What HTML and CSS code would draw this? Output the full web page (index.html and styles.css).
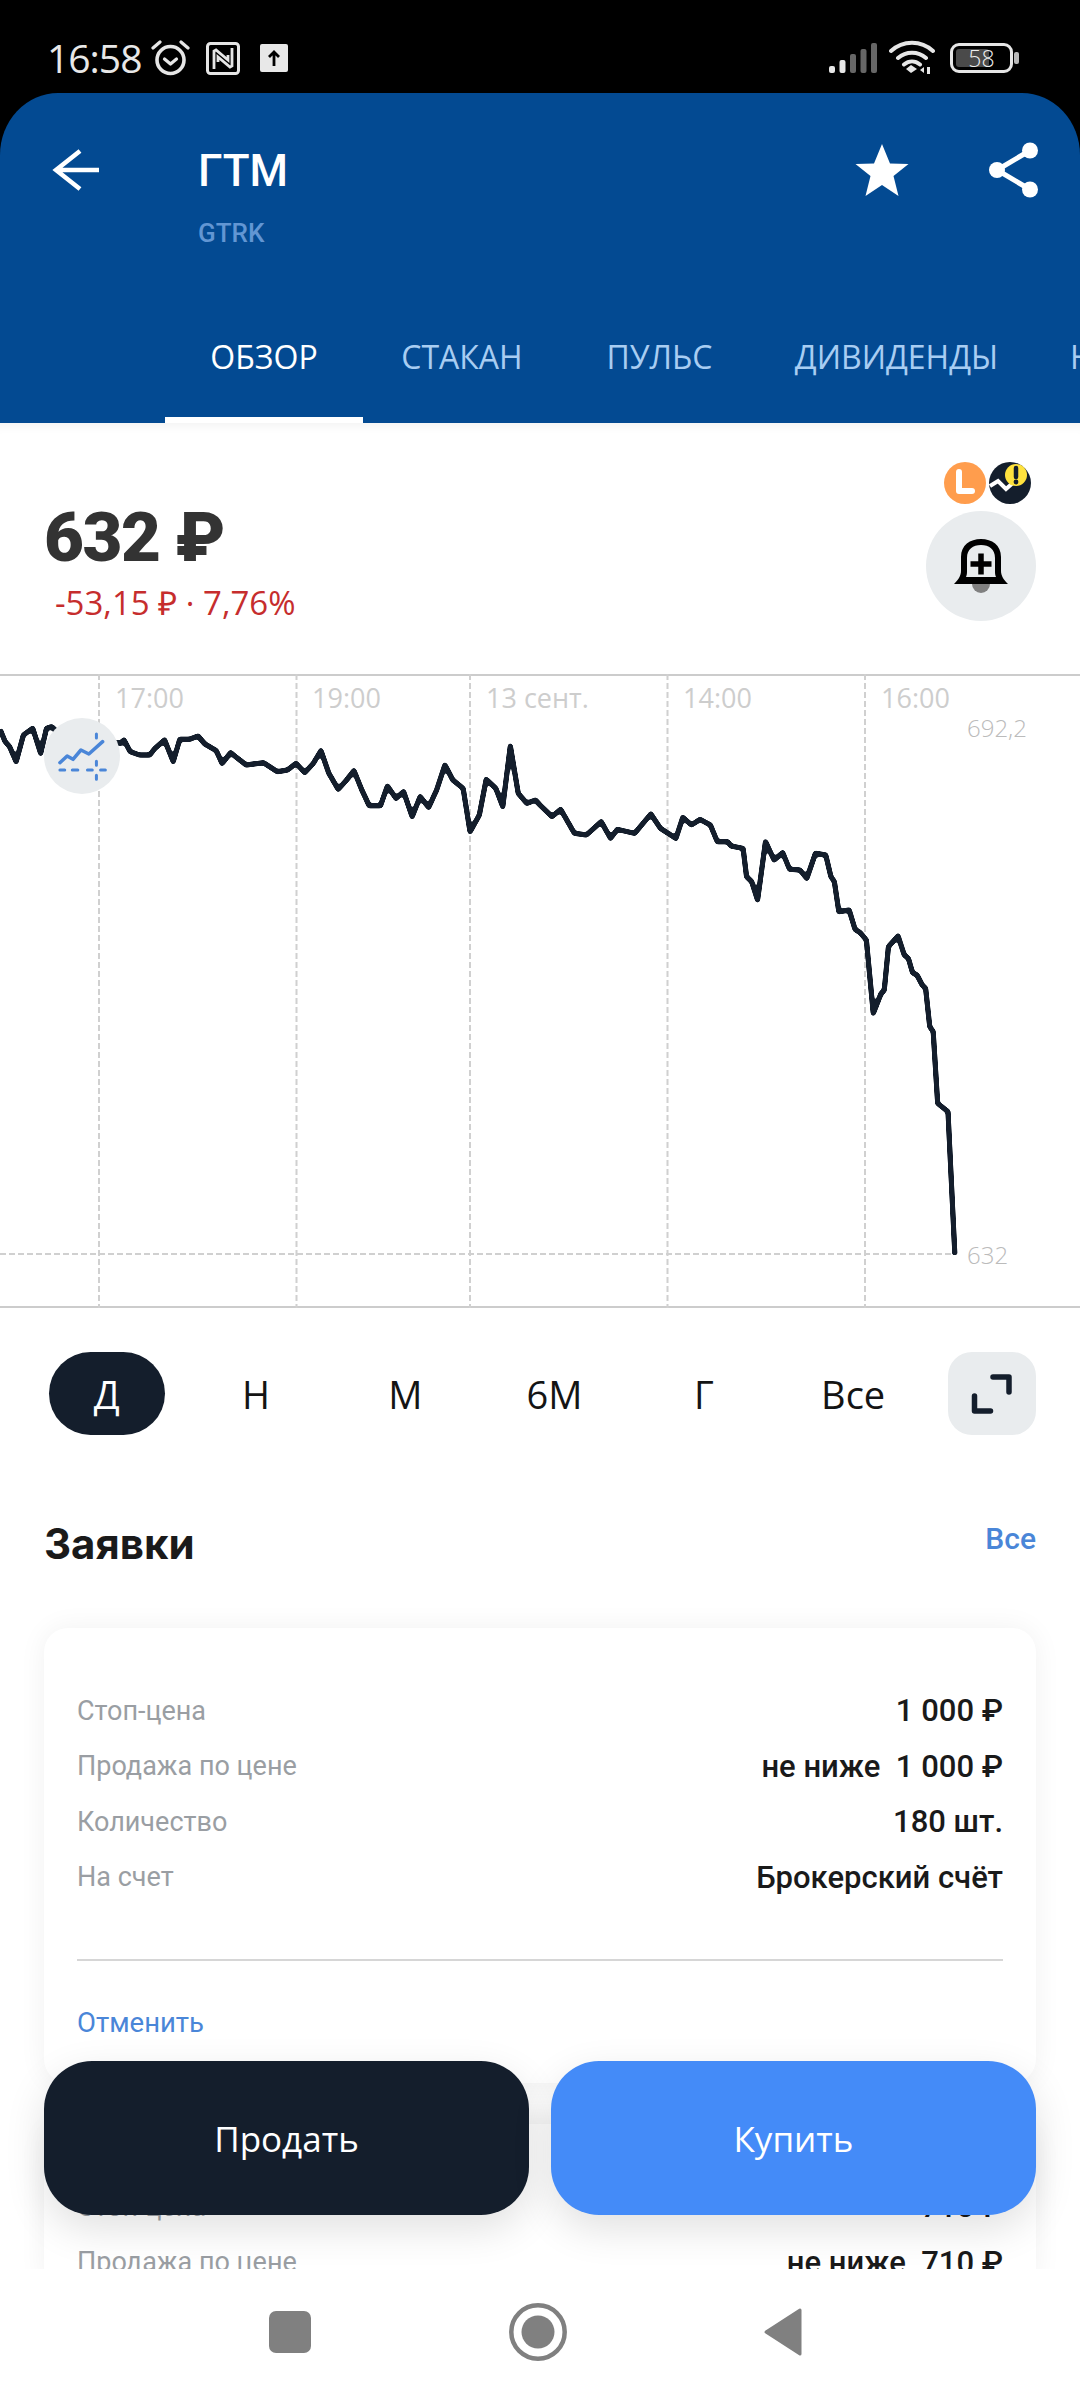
FILE: index.html
```html
<!DOCTYPE html>
<html lang="ru">
<head>
<meta charset="utf-8">
<title>ГТМ</title>
<link rel="stylesheet" href="styles.css">
</head>
<body>
<div class="app">
  <div class="content">
    <div class="top">
      <div class="statusbar">
        <div class="status-left">
          <span class="time">16:58</span>
          <svg class="ico-alarm" viewBox="0 0 39 38" width="39" height="38"><circle cx="19.500" cy="21" r="13.500" fill="none" stroke="#e6e6e6" stroke-width="3.600"/><path d="M13.500 20l6 5 6-5" fill="none" stroke="#e6e6e6" stroke-width="3.200" stroke-linecap="round" stroke-linejoin="round"/><path d="M2 9l7-6M37 9l-7-6" fill="none" stroke="#e6e6e6" stroke-width="3.200" stroke-linecap="round"/></svg>
          <svg class="ico-nfc" viewBox="0 0 34 33" width="34" height="33"><rect x="1.500" y="1.500" width="31" height="30" rx="3" fill="none" stroke="#e6e6e6" stroke-width="3"/><path d="M8 27V9l2-1 12 10v-5M26 6v18l-2 1L12 15v5" fill="none" stroke="#e6e6e6" stroke-width="2.800"/></svg>
          <svg class="ico-up" viewBox="0 0 28 28" width="28" height="28"><rect width="28" height="28" rx="2" fill="#e8e8e8"/><path d="M14 22V8M9 13l5-5 5 5" fill="none" stroke="#000" stroke-width="2.800"/></svg>
        </div>
        <div class="status-right">
          <svg class="ico-signal" viewBox="0 0 48 30" width="48" height="30"><rect x="0" y="23" width="6" height="7" rx="2" fill="#e6e6e6"/><rect x="10.500" y="17" width="6" height="13" rx="2" fill="#e6e6e6"/><rect x="21" y="11" width="6" height="19" rx="2" fill="#666"/><rect x="31.500" y="6" width="6" height="24" rx="2" fill="#666"/><rect x="42" y="0" width="6" height="30" rx="2" fill="#666"/></svg>
          <svg class="ico-wifi" viewBox="0 0 46 36" width="46" height="36"><path d="M2 11C14 0 32 0 44 11M9 18c8-7 20-7 28 0M15 24.500c5-4 11-4 16 0" fill="none" stroke="#e6e6e6" stroke-width="4" stroke-linecap="round"/><path d="M17 29l5-4 6 4-6 4z" fill="#e6e6e6"/><path d="M31 30l4-3v6zM38 27h3v7h-3z" fill="#e6e6e6"/></svg>
          <div class="battery"><span class="batt-fill"></span><span class="batt-num">58</span></div>
          <span class="batt-nub"></span>
        </div>
      </div>
      <header class="header">
        <div class="header-row">
          <svg class="ico-back" viewBox="0 0 50 44" width="50" height="44"><path d="M49 22H7M30 3L6 22l24 19" fill="none" stroke="#fff" stroke-width="4.500"/></svg>
          <div class="titles">
            <div class="title">ГТМ</div>
            <div class="ticker">GTRK</div>
          </div>
          <svg class="ico-star" viewBox="0 0 54 54" width="54" height="54"><path d="M27 1l8 19.500 18.500.5-15 12 5 20L27 42 10.500 53l5-20L.5 21 19 20.500z" fill="#fff"/></svg>
          <svg class="ico-share" viewBox="0 0 50 56" width="50" height="56"><path d="M41 8.500L8 28l33 19.500" fill="none" stroke="#fff" stroke-width="5"/><circle cx="41" cy="8.500" r="8" fill="#fff"/><circle cx="8" cy="28" r="8" fill="#fff"/><circle cx="41" cy="47.500" r="8" fill="#fff"/></svg>
        </div>
        <nav class="tabs">
          <span class="tab tab-active">ОБЗОР</span>
          <span class="tab">СТАКАН</span>
          <span class="tab">ПУЛЬС</span>
          <span class="tab">ДИВИДЕНДЫ</span>
          <span class="tab">НОВОСТИ</span>
        </nav>
      </header>
    </div>

    <section class="quote">
      <div class="quote-main">
        <div class="price">632 ₽</div>
        <div class="change">-53,15 ₽ · 7,76%</div>
      </div>
      <div class="quote-side">
        <div class="badges">
          <svg viewBox="0 0 42 44" width="42" height="44"><circle cx="21" cy="22" r="21" fill="#ff9d4d"/><path d="M15 11v19h13" fill="none" stroke="#fff" stroke-width="6" stroke-linecap="round" stroke-linejoin="round"/></svg>
          <svg viewBox="0 0 42 44" width="42" height="44"><circle cx="21" cy="22" r="21" fill="#141e2c"/><path d="M1 25l8-5 8 8 9-8 8-10" fill="none" stroke="#fff" stroke-width="4"/><circle cx="27" cy="14" r="11" fill="#ffe23e"/><path d="M27 7v9" stroke="#141e2c" stroke-width="4.500" stroke-linecap="round"/><circle cx="27" cy="21" r="2.400" fill="#141e2c"/></svg>
        </div>
        <button class="bell" type="button">
          <svg viewBox="0 0 54 54" width="54" height="54"><path d="M18 45a9 9 0 0 0 18 0z" fill="#808080"/><path d="M7 18C7 6 16 0 27 0s20 6 20 18v14c0 5 3 9 7 13H0c4-4 7-8 7-13z" fill="#000"/><path d="M13 19C13 10 19 6 27 6s14 4 14 13v14c0 2 .5 4 1 5H12c.5-1 1-3 1-5z" fill="#e9ecee"/><path d="M27 14.500v21M16.500 25h21" stroke="#000" stroke-width="5.500"/></svg>
        </button>
      </div>
    </section>

    <div class="chart">
      <svg class="chart-svg" viewBox="0 0 1080 634" width="1080" height="634">
        <defs>
          <filter id="soften" x="-5%" y="-5%" width="110%" height="110%" color-interpolation-filters="sRGB">
            <feGaussianBlur stdDeviation="1.300"/>
            <feComponentTransfer><feFuncA type="linear" slope="5" intercept="-1.700"/></feComponentTransfer>
          </filter>
        </defs>
        <path class="grid-line" d="M99 0V634M296.500 0V634M470 0V634M667.500 0V634M865 0V634"/>
        <path class="grid-line" d="M0 580H953"/>
        <g class="axis-x">
          <text x="115" y="34">17:00</text>
          <text x="312" y="34">19:00</text>
          <text x="486" y="34">13 сент.</text>
          <text x="683" y="34">14:00</text>
          <text x="881" y="34">16:00</text>
        </g>
        <text class="axis-y" x="967" y="63">692,2</text>
        <text class="axis-y" x="967" y="590">632</text>
        <g filter="url(#soften)">
          <g transform="scale(0.34435 0.33333) translate(0 -702)">
            <polyline class="price-line" points="0,868 15,905 28,920 47,965 68,885 95,865 118,940 135,865 150,860 170,880 350,910 360,900 378,935 405,945 435,945 450,925 478,900 503,965 522,898 550,898 575,888 595,912 628,932 645,970 670,938 690,955 715,975 765,968 805,995 835,990 860,970 885,998 910,970 932,932 955,1000 982,1048 1005,1022 1028,992 1050,1048 1072,1097 1105,1097 1125,1038 1150,1075 1172,1055 1197,1130 1220,1070 1245,1102 1268,1050 1292,975 1315,1020 1345,1045 1365,1175 1392,1125 1412,1018 1440,1045 1460,1100 1482,918 1505,1060 1530,1090 1555,1080 1568,1095 1603,1130 1628,1108 1668,1180 1703,1185 1746,1145 1773,1195 1793,1168 1843,1180 1890,1122 1918,1165 1963,1195 1983,1132 2008,1155 2033,1138 2063,1155 2083,1205 2113,1205 2123,1218 2158,1225 2168,1310 2183,1325 2200,1380 2208,1320 2223,1205 2248,1260 2273,1238 2293,1288 2323,1290 2343,1315 2368,1240 2398,1245 2413,1310 2423,1325 2436,1415 2466,1410 2483,1468 2498,1478 2516,1500 2536,1720 2558,1662 2568,1650 2580,1520 2608,1488 2626,1545 2638,1555 2650,1598 2663,1605 2678,1635 2688,1645 2700,1760 2710,1775 2723,1990 2753,2015 2773,2445"/>
          </g>
        </g>
        <circle class="chart-tool" cx="82" cy="82" r="38"/>
        <g transform="scale(0.34435 0.33333) translate(0 -702)">
          <polyline class="tool-line" points="174,968 195,948 212,958 235,930 258,942 298,905"/>
          <path class="tool-dash" d="M174 990h14M210 990h16M254 990h14M292 990h14M280 882v12M280 964v12M280 1006v12"/>
        </g>
      </svg>
    </div>

    <div class="periods">
      <span class="period period-active"><span class="pill">Д</span></span>
      <span class="period">Н</span>
      <span class="period">М</span>
      <span class="period">6М</span>
      <span class="period">Г</span>
      <span class="period">Все</span>
      <button class="expand" type="button">
        <svg viewBox="0 0 88 83" width="88" height="83"><path d="M45 25h16v15M26.500 44v15h16" fill="none" stroke="#141e2c" stroke-width="5.500" stroke-linecap="round" stroke-linejoin="round"/></svg>
      </button>
    </div>

    <section class="orders">
      <div class="orders-head">
        <h2 class="orders-title">Заявки</h2>
        <span class="orders-all">Все</span>
      </div>
      <article class="card">
        <div class="row"><span class="label">Стоп-цена</span><span class="value">1 000 ₽</span></div>
        <div class="row"><span class="label">Продажа по цене</span><span class="value">не ниже&nbsp; 1 000 ₽</span></div>
        <div class="row"><span class="label">Количество</span><span class="value">180 шт.</span></div>
        <div class="row"><span class="label">На счет</span><span class="value">Брокерский счёт</span></div>
        <div class="card-divider"></div>
        <div class="card-foot"><span class="cancel">Отменить</span></div>
      </article>
      <article class="card">
        <div class="row"><span class="label">Стоп-цена</span><span class="value">710 ₽</span></div>
        <div class="row"><span class="label">Продажа по цене</span><span class="value">не ниже&nbsp; 710 ₽</span></div>
      </article>
    </section>
  </div>

  <div class="actions">
    <button class="action action-sell" type="button">Продать</button>
    <button class="action action-buy" type="button">Купить</button>
  </div>

  <nav class="navbar">
    <span class="nav-square"></span>
    <svg viewBox="0 0 58 58" width="58" height="58"><circle cx="29" cy="29" r="26.700" fill="none" stroke="#808080" stroke-width="4.500"/><circle cx="29" cy="29" r="16.500" fill="#808080"/></svg>
    <svg viewBox="0 0 40 50" width="40" height="50"><path d="M37 3v44L3 25z" fill="#808080" stroke="#808080" stroke-width="3" stroke-linejoin="round"/></svg>
  </nav>
</div>
</body>
</html>
```
FILE: styles.css
```css
* { box-sizing: border-box; }
html, body { margin: 0; padding: 0; background: #fff; }
body { font-family: Roboto, "Noto Sans", sans-serif; }

.app {
  position: relative;
  width: 1080px;
  height: 2400px;
  display: flex;
  flex-direction: column;
  overflow: hidden;
}
.content { flex: 1; min-height: 0; overflow: hidden; }

/* status bar */
.top { background: #000; }
.statusbar {
  height: 93px;
  padding: 36px 61px 0 47px;
  display: flex;
  justify-content: space-between;
  align-items: flex-start;
}
.status-left, .status-right { display: flex; align-items: center; }
.time {
  font-family: "Open Sans", sans-serif;
  font-size: 39px;
  line-height: 44px;
  letter-spacing: -1px;
  color: #e8e8e8;
  width: 104px;
}
.ico-nfc { margin-left: 16px; }
.ico-up { margin-left: 20px; }
.status-right { padding-top: 4px; }
.ico-wifi { margin-left: 12px; }
.battery {
  position: relative;
  width: 63px;
  height: 30px;
  margin-left: 15px;
  border: 3px solid #e6e6e6;
  border-radius: 9px;
  display: flex;
  align-items: center;
  justify-content: center;
}
.batt-fill {
  position: absolute;
  left: 3px;
  top: 3px;
  bottom: 3px;
  width: 33px;
  background: #4a4a4a;
  border-radius: 3px;
}
.batt-num {
  position: relative;
  font-family: "Open Sans", sans-serif;
  font-size: 23px;
  font-weight: 300;
  line-height: 24px;
  color: #eee;
}
.batt-nub {
  width: 5px;
  height: 12px;
  margin-left: 1px;
  background: #b8b8b8;
  border-radius: 2px;
}

/* header */
.header {
  height: 330px;
  background: #034a92;
  border-radius: 58px 58px 0 0 / 62px 62px 0 0;
  display: flex;
  flex-direction: column;
}
.header-row {
  height: 225px;
  display: flex;
  align-items: flex-start;
  padding-left: 50px;
}
.ico-back { margin-top: 55px; }
.titles { margin-left: 98px; padding-top: 53px; flex: 1; }
.title { font-size: 44px; font-weight: 500; line-height: 50px; color: #fff; }
.ticker { font-size: 26px; font-weight: 500; line-height: 30px; margin-top: 22px; color: #6296d3; }
.ico-star { margin-top: 50px; margin-right: 80px; }
.ico-share { margin-top: 49px; margin-right: 41px; }

.tabs { display: flex; padding-left: 165px; overflow: hidden; white-space: nowrap; }
.tab {
  flex: none;
  height: 105px;
  font-family: "Open Sans", sans-serif;
  font-size: 32px;
  line-height: 78px;
  text-align: center;
  color: #a8cdf2;
  border-bottom: 6px solid transparent;
}
.tab:nth-child(1), .tab:nth-child(2) { width: 198px; }
.tab:nth-child(3) { width: 197px; }
.tab:nth-child(4) { width: 277px; }
.tab:nth-child(5) { padding-left: 35px; }
.tab-active { color: #fff; border-bottom-color: #fff; }

/* quote */
.quote {
  height: 251px;
  display: flex;
  justify-content: space-between;
  padding: 38px 44px 0 44px;
  box-shadow: inset 0 14px 12px -12px rgba(0, 0, 0, .06);
}
.price {
  font-family: Roboto, sans-serif;
  font-size: 69px;
  font-weight: 900;
  line-height: 80px;
  letter-spacing: -1.500px;
  color: #333;
  margin-top: 37px;
}
.change {
  font-family: "Open Sans", sans-serif;
  font-size: 33px;
  line-height: 40px;
  color: #c62d2d;
  margin: 5px 0 0 11px;
}
.quote-side { display: flex; flex-direction: column; align-items: flex-end; }
.badges { display: flex; gap: 3px; margin-right: 5px; }
.bell {
  width: 110px;
  height: 110px;
  margin-top: 6px;
  border: 0;
  padding: 0;
  border-radius: 50%;
  background: #e9ecee;
  display: flex;
  align-items: center;
  justify-content: center;
}

/* chart */
.chart { height: 634px; border-top: 2px solid #ccc; border-bottom: 2px solid #ccc; }
.chart-svg { display: block; margin-top: -2px; }
.grid-line { fill: none; stroke: #d0d0d0; stroke-width: 2; stroke-dasharray: 6 3; }
.axis-x text { font-family: "Open Sans", sans-serif; font-size: 27px; fill: #cdcdcd; }
.axis-y { font-family: "Open Sans", sans-serif; font-size: 24px; font-weight: 300; fill: #bbb; }
.price-line {
  fill: none;
  stroke: #141e2c;
  stroke-width: 5px;
  stroke-linejoin: round;
  vector-effect: non-scaling-stroke;
}
.chart-tool { fill: #e9ecee; }
.tool-line {
  fill: none;
  stroke: #4a86d8;
  stroke-width: 3.500px;
  stroke-linecap: round;
  stroke-linejoin: round;
  vector-effect: non-scaling-stroke;
}
.tool-dash {
  fill: none;
  stroke: #4a86d8;
  stroke-width: 3px;
  stroke-linecap: round;
  vector-effect: non-scaling-stroke;
}

/* periods */
.periods {
  height: 83px;
  margin-top: 44px;
  padding-left: 32px;
  display: flex;
  align-items: center;
}
.period {
  width: 149.300px;
  height: 83px;
  display: flex;
  align-items: center;
  justify-content: center;
  font-family: "Open Sans", sans-serif;
  font-size: 38px;
  color: #141414;
}
.pill {
  width: 116px;
  height: 83px;
  border-radius: 42px;
  background: #141e2c;
  color: #fff;
  display: flex;
  align-items: center;
  justify-content: center;
}
.expand {
  width: 88px;
  height: 83px;
  margin-left: 20px;
  padding: 0;
  border: 0;
  border-radius: 24px;
  background: #e9ecee;
}
.expand svg { display: block; }

/* orders */
.orders { padding: 0 44px; }
.orders-head {
  height: 193px;
  display: flex;
  justify-content: space-between;
  padding-top: 83px;
  align-items: flex-start;
}
.orders-title {
  margin: 0;
  font-family: Inter, sans-serif;
  font-size: 42px;
  font-weight: 700;
  line-height: 52px;
  color: #1a1a1a;
}
.orders-all { font-size: 30px; font-weight: 500; line-height: 36px; margin-top: 3px; color: #4a86d8; }
.card {
  background: #fff;
  border-radius: 24px;
  padding: 55px 33px 0;
  box-shadow: 0 0 28px rgba(0, 0, 0, .06);
  margin-bottom: 41px;
}
.row {
  height: 55.500px;
  display: flex;
  justify-content: space-between;
  align-items: center;
}
.label { font-size: 27px; color: #9a9ea3; }
.value { font-size: 31px; font-weight: 500; color: #1a1a1a; }
.card-divider { height: 2px; margin-top: 54px; background: #d6d6d6; }
.card-foot { height: 122px; display: flex; align-items: center; }
.cancel { font-size: 27.500px; color: #4a86d8; }

/* floating actions */
.actions {
  position: absolute;
  left: 44px;
  right: 44px;
  top: 2061px;
  display: flex;
  gap: 22px;
}
.action {
  flex: 1;
  height: 154px;
  border: 0;
  border-radius: 48px;
  font-family: "Open Sans", sans-serif;
  font-size: 35px;
  color: #fff;
  box-shadow: 0 14px 40px rgba(0, 0, 0, .12);
}
.action-sell { background: #141e2c; }
.action-buy { background: #448bf8; }

/* nav */
.navbar {
  height: 131px;
  background: #fff;
  display: flex;
  align-items: center;
  padding: 0 0 6px 269px;
}
.nav-square { width: 42px; height: 42px; border-radius: 7px; background: #808080; }
.navbar svg:nth-of-type(1) { margin-left: 198px; }
.navbar svg:nth-of-type(2) { margin-left: 196px; }
```
